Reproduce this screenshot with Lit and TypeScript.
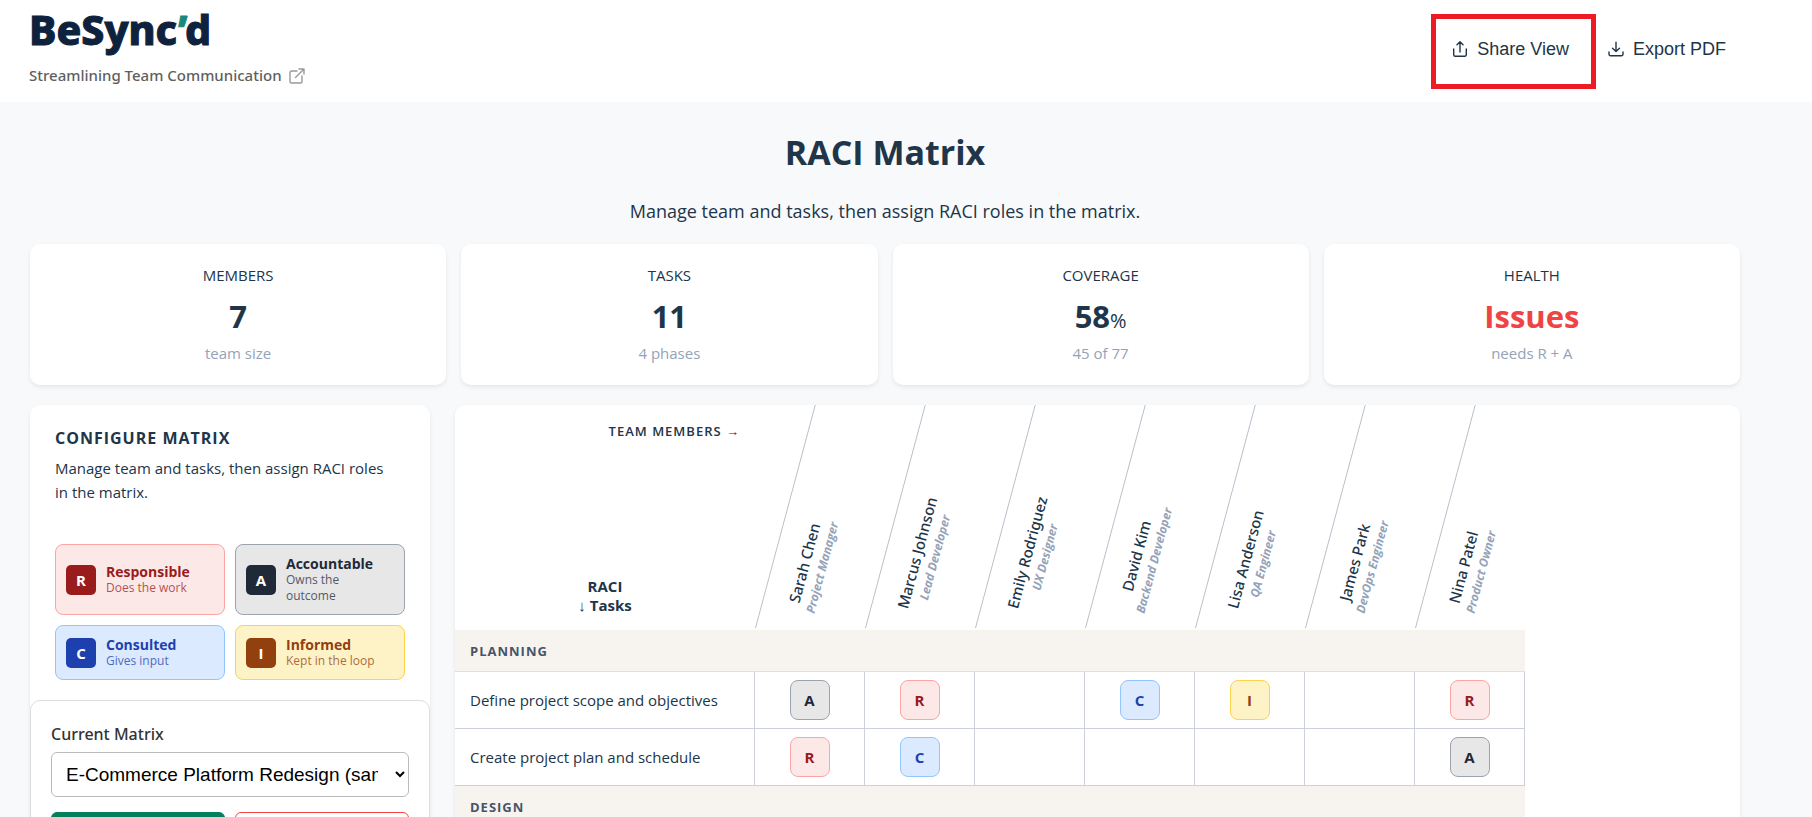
import { LitElement, html, css, svg, nothing } from "lit";
import { customElement, property, state } from "lit/decorators.js";

type Role = "R" | "A" | "C" | "I";

interface Member {
  name: string;
  title: string;
}

interface Task {
  name: string;
  roles: (Role | null)[];
}

interface Phase {
  name: string;
  tasks: Task[];
}

const MEMBERS: Member[] = [
  { name: "Sarah Chen", title: "Project Manager" },
  { name: "Marcus Johnson", title: "Lead Developer" },
  { name: "Emily Rodriguez", title: "UX Designer" },
  { name: "David Kim", title: "Backend Developer" },
  { name: "Lisa Anderson", title: "QA Engineer" },
  { name: "James Park", title: "DevOps Engineer" },
  { name: "Nina Patel", title: "Product Owner" },
];

const PHASES: Phase[] = [
  {
    name: "Planning",
    tasks: [
      { name: "Define project scope and objectives", roles: ["A", "R", null, "C", "I", null, "R"] },
      { name: "Create project plan and schedule", roles: ["R", "C", null, null, null, null, "A"] },
    ],
  },
  { name: "Design", tasks: [] },
];

const LEGEND: { key: Role; title: string; note: string }[] = [
  { key: "R", title: "Responsible", note: "Does the work" },
  { key: "A", title: "Accountable", note: "Owns the outcome" },
  { key: "C", title: "Consulted", note: "Gives input" },
  { key: "I", title: "Informed", note: "Kept in the loop" },
];

const stroke = (body: unknown, cls = "icon") => html`
  <svg class=${cls} viewBox="0 0 16 16" fill="none" stroke="currentColor" stroke-width="1.4"
    stroke-linecap="round" stroke-linejoin="round" aria-hidden="true">${body}</svg>`;

const shareIcon = stroke(svg`<path d="M1.700 8v5.700a1.500 1.500 0 0 0 1.500 1.500h9.600a1.500 1.500 0 0 0 1.500-1.500V8M8 11V.8M5 3.700 8 .8l3 2.900"/>`);
const exportIcon = stroke(svg`<path d="M1 11v2.200a1.500 1.500 0 0 0 1.500 1.500h11a1.500 1.500 0 0 0 1.500-1.500V11M8 1.200v9.300M4.500 7.200 8 10.500l3.500-3.300"/>`);
const linkIcon = stroke(svg`<path d="M8 3H2.500A1.500 1.500 0 0 0 1 4.500v9A1.500 1.500 0 0 0 2.500 15h9a1.500 1.500 0 0 0 1.500-1.500V8M10 1h5v5M15 1 6.500 9.500"/>`, "icon muted");

const tones = css`
  .tone-R { color: #991b1b; background: #fde8e8; border-color: #fca5a5; --solid: #991b1b; }
  .tone-A { color: #1f2937; background: #e7e7e7; border-color: #9ca3af; --solid: #1f2937; }
  .tone-C { color: #1e40af; background: #dbeafe; border-color: #93c5fd; --solid: #1e40af; }
  .tone-I { color: #92400e; background: #fef3c7; border-color: #fcd34d; --solid: #92400e; }
`;

@customElement("app-header")
export class AppHeader extends LitElement {
  static styles = css`
    :host {
      display: flex;
      justify-content: space-between;
      align-items: flex-start;
      box-sizing: border-box;
      padding: 8px 72px 15px 29px;
      background: #fff;
    }
    .brand { display: flex; flex-direction: column; gap: 14px; }
    .logo {
      font: 800 41px/42px "Noto Sans", sans-serif;
      color: #0f223d;
      -webkit-text-stroke: 1px currentColor;
      stroke-linejoin: round;
    }
    .tick { color: #1a897c; }
    .tagline {
      display: flex;
      align-items: center;
      gap: 7px;
      font-family: "Noto Sans", sans-serif;
      font-size: 15px;
      line-height: 23px;
      font-weight: 500;
      color: #5f5f5f;
      text-decoration: none;
    }
    .icon { width: 16px; height: 16px; flex: none; display: block; }
    .muted { color: #999; }
    .actions { display: flex; gap: 9px; padding-top: 19px; }
    .action {
      position: relative;
      display: flex;
      align-items: center;
      gap: 9px;
      height: 44px;
      padding: 0 14px 0 16px;
      border: 0;
      background: none;
      color: #213549;
      font: 18px "Liberation Sans", Arial, sans-serif;
      cursor: pointer;
    }
    .marked::after {
      content: "";
      position: absolute;
      inset: -13px -13px -18px -5px;
      border: 5px solid #ed1c24;
      pointer-events: none;
    }
  `;

  render() {
    return html`
      <div class="brand">
        <div class="logo">BeSync<span class="tick">’</span>d</div>
        <a class="tagline" href="#about">Streamlining Team Communication ${linkIcon}</a>
      </div>
      <div class="actions">
        <button class="action marked" type="button">${shareIcon}Share View</button>
        <button class="action" type="button">${exportIcon}Export PDF</button>
      </div>
    `;
  }
}

@customElement("stat-card")
export class StatCard extends LitElement {
  @property() label = "";
  @property() value = "";
  @property() unit = "";
  @property() note = "";
  @property({ type: Boolean }) alert = false;

  static styles = css`
    :host {
      display: flex;
      flex-direction: column;
      align-items: center;
      padding: 20px;
      background: #fff;
      border-radius: 10px;
      box-shadow: 0 2px 4px rgba(0, 0, 0, 0.08);
    }
    .label { font-size: 15px; line-height: 22px; text-transform: uppercase; }
    .value { font-size: 31px; line-height: 37px; font-weight: 700; margin: 12px 0 6px; }
    .unit { font-size: 20px; line-height: 20px; font-weight: 400; }
    .note { font-size: 15px; line-height: 24px; color: #94a3b8; }
    .alert { color: #ef4444; }
  `;

  render() {
    return html`
      <div class="label">${this.label}</div>
      <div class="value ${this.alert ? "alert" : ""}">${this.value}${this.unit
        ? html`<span class="unit">${this.unit}</span>`
        : nothing}</div>
      <div class="note">${this.note}</div>
    `;
  }
}

@customElement("config-panel")
export class ConfigPanel extends LitElement {
  static styles = [
    tones,
    css`
      :host {
        display: block;
        background: #fff;
        border-radius: 10px;
        box-shadow: 0 2px 4px rgba(0, 0, 0, 0.08);
      }
      .intro { padding: 20px 25px; }
      .title {
        margin: 0;
        font-size: 16px;
        line-height: 26px;
        font-weight: 700;
        letter-spacing: 1px;
        text-transform: uppercase;
      }
      .text { max-width: 340px; margin: 5px 0 40px; font-size: 15px; line-height: 24px; }
      .legend { display: grid; grid-template-columns: 1fr 1fr; gap: 10px; }
      .entry {
        display: flex;
        align-items: center;
        gap: 10px;
        padding: 10px 16px 10px 10px;
        border-width: 1px;
        border-style: solid;
        border-radius: 8px;
      }
      .key {
        display: grid;
        place-items: center;
        flex: none;
        width: 30px;
        height: 30px;
        border-radius: 5px;
        background: var(--solid);
        color: #fff;
        font-size: 15px;
        font-weight: 700;
      }
      .name { font-size: 14px; line-height: 17px; font-weight: 700; }
      .note { font-size: 12px; line-height: 16px; opacity: 0.75; }
      .picker {
        padding: 20px;
        border: 1px solid #ddd;
        border-radius: 10px;
      }
      .caption {
        display: block;
        margin-bottom: 5px;
        font-family: "Noto Sans", sans-serif;
        font-size: 16px;
        line-height: 26px;
        font-weight: 500;
        color: #333;
      }
      .select {
        width: 100%;
        height: 45px;
        padding: 0 14px 0 10px;
        border: 1px solid #bbb;
        border-radius: 6px;
        background: #fff;
        color: #000;
        font: 19px "Liberation Sans", Arial, sans-serif;
      }
      .row { display: grid; grid-template-columns: 1fr 1fr; gap: 10px; margin-top: 15px; }
      .btn {
        height: 44px;
        border: 1px solid #ef4444;
        border-radius: 6px;
        background: #fff;
        color: #ef4444;
        font: 16px "Liberation Sans", Arial, sans-serif;
      }
      .primary { background: #04805f; border-color: #04805f; color: #fff; }
    `,
  ];

  render() {
    return html`
      <div class="intro">
        <h2 class="title">Configure Matrix</h2>
        <p class="text">Manage team and tasks, then assign RACI roles in the matrix.</p>
        <div class="legend">
          ${LEGEND.map(
            (l) => html`
              <div class="entry tone-${l.key}">
                <span class="key">${l.key}</span>
                <div>
                  <div class="name">${l.title}</div>
                  <div class="note">${l.note}</div>
                </div>
              </div>
            `,
          )}
        </div>
      </div>
      <div class="picker">
        <label class="caption" for="matrix">Current Matrix</label>
        <select class="select" id="matrix">
          <option>E-Commerce Platform Redesign (sample)</option>
        </select>
        <div class="row">
          <button class="btn primary" type="button">New</button>
          <button class="btn" type="button">Delete</button>
        </div>
      </div>
    `;
  }
}

@customElement("raci-table")
export class RaciTable extends LitElement {
  @state() private phases: Phase[] = PHASES;

  static styles = [
    tones,
    css`
      :host {
        display: block;
        overflow: hidden;
        background: #fff;
        border-radius: 10px;
        box-shadow: 0 2px 4px rgba(0, 0, 0, 0.08);
      }
      .grid { table-layout: fixed; width: 1070px; border-collapse: separate; border-spacing: 0; }
      .col-task { width: 300px; }
      .col-member { width: 110px; }
      .corner, .member { height: 225px; padding: 0; box-sizing: border-box; }
      .corner-box {
        display: flex;
        flex-direction: column;
        justify-content: space-between;
        box-sizing: border-box;
        height: 225px;
        padding: 15px;
      }
      .across {
        align-self: flex-end;
        font-size: 13px;
        line-height: 22px;
        font-weight: 600;
        letter-spacing: 1px;
      }
      .down { font-size: 15px; line-height: 19px; font-weight: 700; text-align: center; }
      .member {
        position: relative;
        padding: 0 0 15px 63px;
        vertical-align: bottom;
        text-align: left;
        font-weight: 400;
      }
      .member::before {
        content: "";
        position: absolute;
        inset: 0 0 2px 0;
        border-left: 1px solid #b9bfca;
        transform: skewX(-15deg);
        transform-origin: 0 100%;
      }
      .tilt {
        display: block;
        width: max-content;
        text-align: center;
        white-space: nowrap;
        transform: rotate(-75deg);
        transform-origin: 0 100%;
      }
      .who { display: block; font-family: "Noto Sans", sans-serif; font-size: 15px; line-height: 21px; font-weight: 500; }
      .job { display: block; font-size: 12px; line-height: 16px; font-weight: 700; font-style: italic; color: #94a3b8; }
      .phase {
        height: 42px;
        box-sizing: border-box;
        padding: 0 15px;
        background: #f7f4ef;
        border-bottom: 1px solid #e9ded4;
        color: #475569;
        font-size: 13px;
        font-weight: 700;
        letter-spacing: 1px;
        text-align: left;
        text-transform: uppercase;
      }
      .task, .cell {
        height: 57px;
        box-sizing: border-box;
        padding: 0;
        border-right: 1px solid #ccd0da;
        border-bottom: 1px solid #ccd0da;
      }
      .task { padding: 0 15px; font-size: 15px; font-weight: 400; text-align: left; white-space: nowrap; }
      .badge {
        display: block;
        width: 40px;
        height: 40px;
        margin: 0 auto;
        padding: 0;
        border-width: 1px;
        border-style: solid;
        border-radius: 8px;
        font: 700 15px "Open Sans", sans-serif;
        cursor: pointer;
      }
    `,
  ];

  render() {
    return html`
      <table class="grid">
        <colgroup>
          <col class="col-task" />
          ${MEMBERS.map(() => html`<col class="col-member" />`)}
        </colgroup>
        <thead>
          <tr>
            <th class="corner">
              <div class="corner-box">
                <div class="across">TEAM MEMBERS →</div>
                <div class="down">RACI<br />↓ Tasks</div>
              </div>
            </th>
            ${MEMBERS.map(
              (m) => html`
                <th class="member" scope="col">
                  <span class="tilt"><span class="who">${m.name}</span><span class="job">${m.title}</span></span>
                </th>
              `,
            )}
          </tr>
        </thead>
        <tbody>
          ${this.phases.map(
            (p) => html`
              <tr><th class="phase" colspan=${MEMBERS.length + 1} scope="colgroup">${p.name}</th></tr>
              ${p.tasks.map(
                (t) => html`
                  <tr>
                    <th class="task" scope="row">${t.name}</th>
                    ${t.roles.map(
                      (r) => html`<td class="cell">${r
                        ? html`<button class="badge tone-${r}" type="button">${r}</button>`
                        : nothing}</td>`,
                    )}
                  </tr>
                `,
              )}
            `,
          )}
        </tbody>
      </table>
    `;
  }
}

@customElement("app-root")
export class AppRoot extends LitElement {
  static styles = css`
    :host {
      display: block;
      height: 100vh;
      overflow: hidden;
      background: #f8f9fb;
      color: #213549;
      font-family: "Open Sans", "Noto Sans", sans-serif;
    }
    .content { padding: 26px 72px 30px 30px; }
    .heading { margin: 0; font-size: 34px; line-height: 48px; font-weight: 700; text-align: center; }
    .lead { margin: 20px 0 18px; font-size: 18px; line-height: 30px; text-align: center; }
    .stats { display: grid; grid-template-columns: repeat(4, 1fr); gap: 15px; margin-bottom: 20px; }
    .workspace { display: grid; grid-template-columns: 400px minmax(0, 1fr); gap: 25px; }
  `;

  render() {
    return html`
      <app-header></app-header>
      <main class="content">
        <h1 class="heading">RACI Matrix</h1>
        <p class="lead">Manage team and tasks, then assign RACI roles in the matrix.</p>
        <section class="stats">
          <stat-card label="Members" value="7" note="team size"></stat-card>
          <stat-card label="Tasks" value="11" note="4 phases"></stat-card>
          <stat-card label="Coverage" value="58" unit="%" note="45 of 77"></stat-card>
          <stat-card label="Health" value="Issues" note="needs R + A" alert></stat-card>
        </section>
        <section class="workspace">
          <config-panel></config-panel>
          <raci-table></raci-table>
        </section>
      </main>
    `;
  }
}
